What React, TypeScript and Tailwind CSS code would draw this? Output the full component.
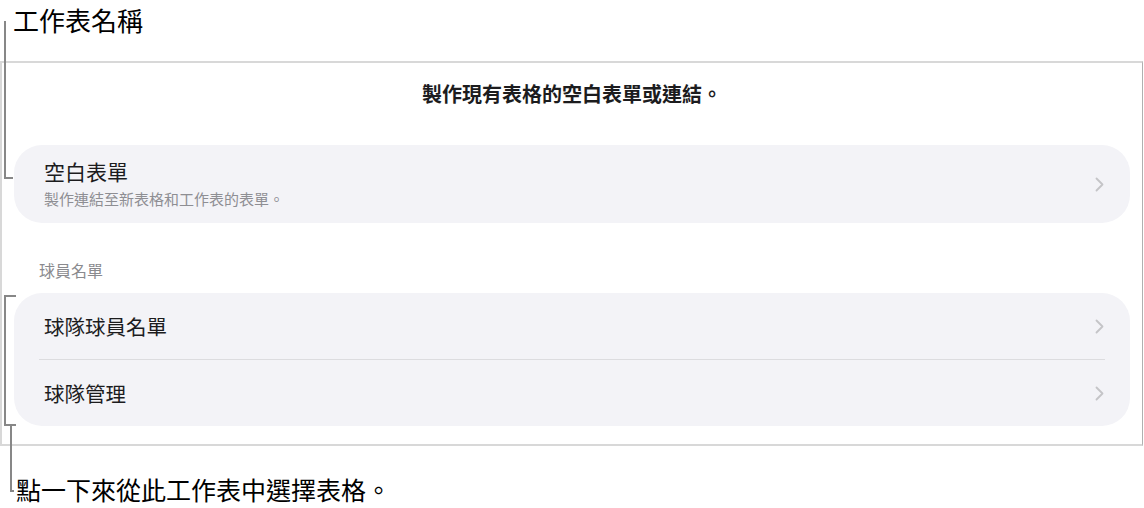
import React from 'react';

const FONT = "font-['Noto_Sans_CJK_TC','Noto_Sans',sans-serif]";

function Chevron() {
  return (
    <svg width="9" height="15" viewBox="0 0 9 15" fill="none" className="shrink-0">
      <path d="M1.5 1.5l6 6-6 6" stroke="#c4c4c7" strokeWidth="1.8" strokeLinecap="round" strokeLinejoin="round" />
    </svg>
  );
}

function Row({ title }: { title: string }) {
  return (
    <div className="flex items-center justify-between pl-[30px] pr-[26px] h-[66px]">
      <span className="text-[20.5px] leading-[24px] text-[#1c1c1e]">{title}</span>
      <Chevron />
    </div>
  );
}

export default function App() {
  return (
    <div className={`relative w-[1144px] h-[508px] bg-white ${FONT}`}>
      {/* sheet name label */}
      <div className="h-[61px] pt-[4px] pl-[13px]">
        <span className="text-[26px] leading-[32px] text-black">工作表名稱</span>
      </div>

      {/* form picker panel */}
      <div className="w-[1143px] border-2 border-[#d8d8d8] border-r-[#b0b0b0] border-r px-[12px] pt-[17px] pb-[18px]">
        <h1 className="text-center text-[20px] leading-[28px] font-semibold text-[#1c1c1e]">
          製作現有表格的空白表單或連結。
        </h1>

        <div className="mt-[37px] flex items-center justify-between rounded-[28px] bg-[#f3f3f7] pl-[30px] pr-[26px] pt-[14px] pb-[14px]">
          <div className="flex flex-col gap-[6px]">
            <span className="text-[21px] leading-[24px] text-[#1c1c1e]">空白表單</span>
            <span className="text-[15px] leading-[20px] text-[#8e8e93]">製作連結至新表格和工作表的表單。</span>
          </div>
          <Chevron />
        </div>

        <div className="mt-[37px] pl-[25px] text-[16px] leading-[20px] text-[#8a8a8e]">球員名單</div>

        <div className="mt-[13px] rounded-[28px] bg-[#f3f3f7]">
          <Row title="球隊球員名單" />
          <div className="mx-[25px] h-px bg-[#dcdcdf]" />
          <Row title="球隊管理" />
        </div>
      </div>

      {/* tap hint label */}
      <div className="mt-[27px] pl-[16px]">
        <span className="text-[25px] leading-[32px] text-black">點一下來從此工作表中選擇表格。</span>
      </div>

      {/* callout lines */}
      <div className="absolute left-[4px] top-[21px] w-[9px] h-[158px] border-l-2 border-b-2 border-[#878787]" />
      <div className="absolute left-[4px] top-[295px] w-[12px] h-[131px] border-l-2 border-t-2 border-b-2 border-[#878787]" />
      <div className="absolute left-[10px] top-[426px] w-[4px] h-[66px] border-l-2 border-b-2 border-[#878787]" />
    </div>
  );
}
